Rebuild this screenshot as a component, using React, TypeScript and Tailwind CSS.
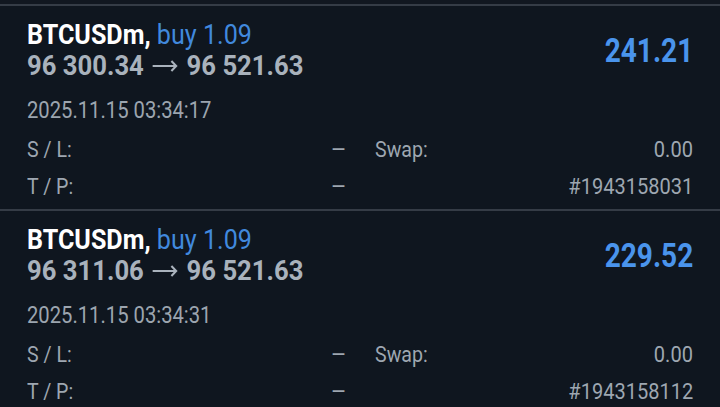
const positions = [
  {
    symbol: "BTCUSDm",
    side: "buy 1.09",
    open: "96 300.34",
    current: "96 521.63",
    time: "2025.11.15 03:34:17",
    profit: "241.21",
    ticket: "#1943158031",
  },
  {
    symbol: "BTCUSDm",
    side: "buy 1.09",
    open: "96 311.06",
    current: "96 521.63",
    time: "2025.11.15 03:34:31",
    profit: "229.52",
    ticket: "#1943158112",
  },
];

type Position = (typeof positions)[number];

function Arrow() {
  return (
    <svg
      width="27"
      height="12"
      viewBox="0 0 27 12"
      className="mx-[9px] inline-block align-[3.5px]"
      fill="none"
      stroke="#a9b2bc"
      strokeWidth="2.2"
    >
      <path d="M0 6h25M20 1l5 5-5 5" />
    </svg>
  );
}

// the app uses a condensed face; squeeze Roboto horizontally to match
function DetailRow({ label, value }: { label: string; value: string }) {
  return (
    <div className="flex h-[37px] items-center justify-between">
      <span className="inline-block origin-left scale-x-[0.89]">{label}</span>
      {value === "–" ? (
        <span className="mr-[-1px] text-[24px]">{value}</span>
      ) : (
        <span className="inline-block origin-right scale-x-[0.91]">{value}</span>
      )}
    </div>
  );
}

function PositionCard({ p }: { p: Position }) {
  return (
    <div className="h-[205px] border-t-2 border-[#353c46] px-[27px] pt-[14px]">
      <div className="flex items-center justify-between">
        <div className="text-[27px] font-bold leading-[31px]">
          <div className="origin-left scale-x-[0.93] whitespace-nowrap">
            <span className="text-white">{p.symbol},</span>{" "}
            <span className="font-normal text-[#4189dd]">{p.side}</span>
          </div>
          <div className="origin-left scale-x-[0.95] whitespace-nowrap text-[#a9b2bc]">
            {p.open}
            <Arrow />
            {p.current}
          </div>
        </div>
        <div className="origin-right scale-x-[0.85] text-[33px] font-bold text-[#4a94ec]">
          {p.profit}
        </div>
      </div>
      <div className="mt-[14px] origin-left scale-x-[0.86] text-[23.5px] leading-[28px] text-[#9ca5af]">
        {p.time}
      </div>
      <div className="mt-[7px] grid grid-cols-2 gap-x-[29px] text-[22px] text-[#9ea7b1]">
        <DetailRow label="S / L:" value="–" />
        <DetailRow label="Swap:" value="0.00" />
        <DetailRow label="T / P:" value="–" />
        <DetailRow label="" value={p.ticket} />
      </div>
    </div>
  );
}

export default function App() {
  return (
    <div
      className="h-[407px] w-[720px] overflow-hidden bg-[#0f161f]"
      style={{ fontFamily: "Roboto, 'Noto Sans', sans-serif" }}
    >
      <div className="h-[4px] bg-[#111720]" />
      {positions.map((p) => (
        <PositionCard key={p.ticket} p={p} />
      ))}
    </div>
  );
}
